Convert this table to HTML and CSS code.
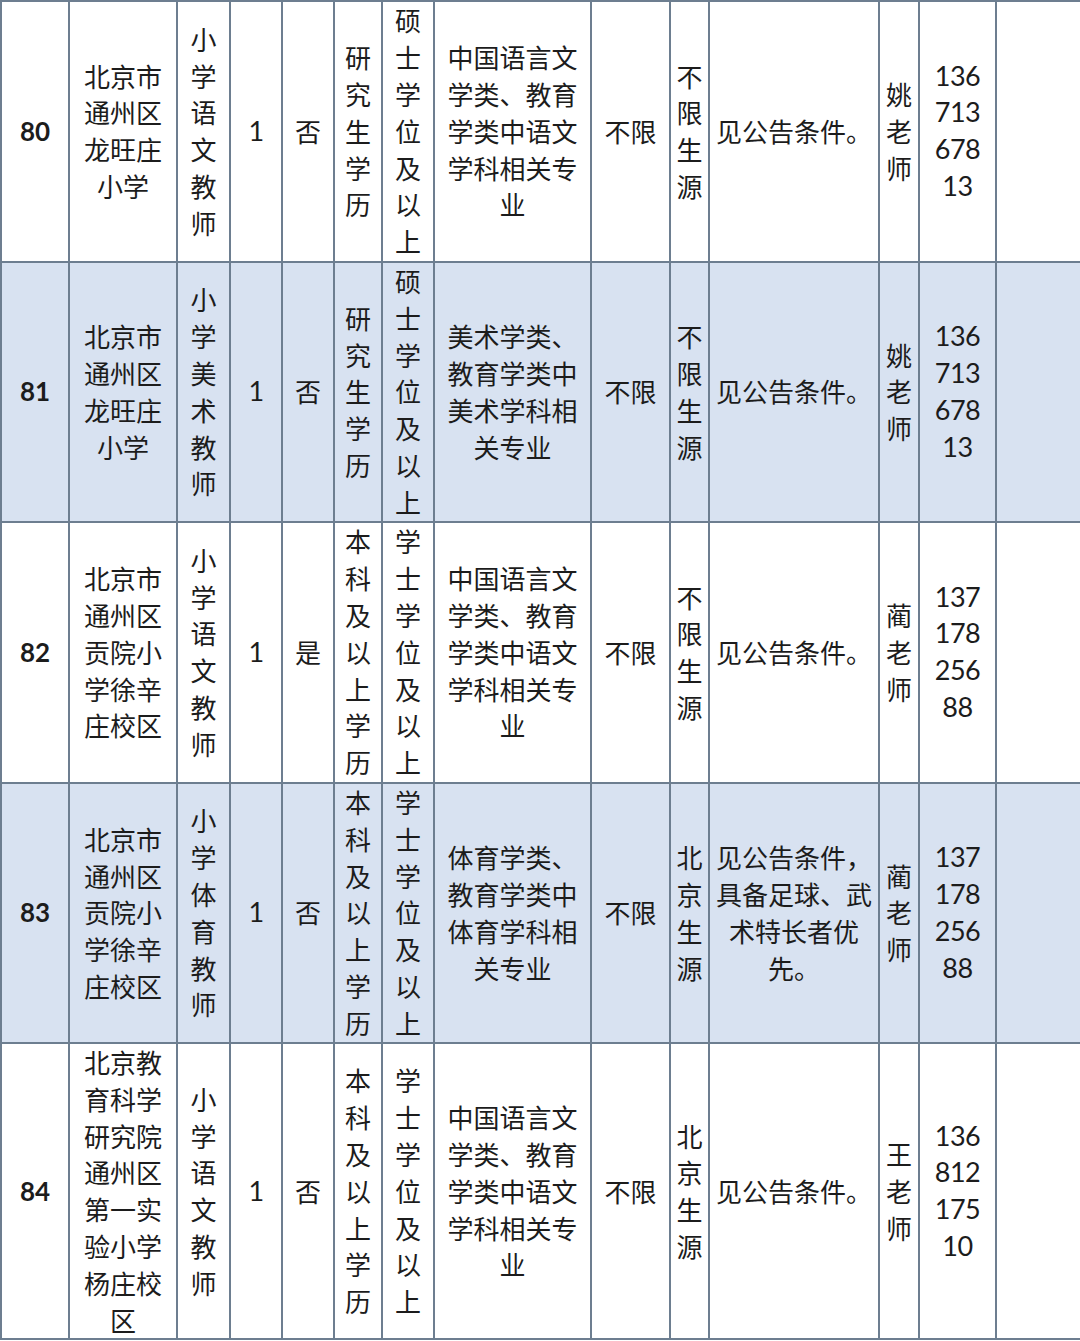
FILE: index.html
```html
<!DOCTYPE html>
<html lang="zh-CN">
<head>
<meta charset="utf-8">
<title>招聘岗位表</title>
<link rel="stylesheet" href="styles.css">
</head>
<body>
<table class="jobs">
  <colgroup>
    <col class="c-no"><col class="c-school"><col class="c-post"><col class="c-num"><col class="c-yn">
    <col class="c-edu"><col class="c-deg"><col class="c-major"><col class="c-age"><col class="c-src">
    <col class="c-cond"><col class="c-contact"><col class="c-phone"><col class="c-note">
  </colgroup>
  <tbody>
    <tr class="r">
      <td class="no">80</td>
      <td class="school">北京市通州区龙旺庄小学</td>
      <td class="v">小学语文教师</td>
      <td class="num">1</td>
      <td>否</td>
      <td class="v">研究生学历</td>
      <td class="v">硕士学位及以上</td>
      <td class="major">中国语言文学类、教育学类中语文学科相关专业</td>
      <td>不限</td>
      <td class="v">不限生源</td>
      <td class="cond">见公告条件。</td>
      <td class="v">姚老师</td>
      <td class="phone">136<br>713<br>678<br>13</td>
      <td class="note"></td>
    </tr>
    <tr class="r alt">
      <td class="no">81</td>
      <td class="school">北京市通州区龙旺庄小学</td>
      <td class="v">小学美术教师</td>
      <td class="num">1</td>
      <td>否</td>
      <td class="v">研究生学历</td>
      <td class="v">硕士学位及以上</td>
      <td class="major">美术学类、教育学类中美术学科相关专业</td>
      <td>不限</td>
      <td class="v">不限生源</td>
      <td class="cond">见公告条件。</td>
      <td class="v">姚老师</td>
      <td class="phone">136<br>713<br>678<br>13</td>
      <td class="note"></td>
    </tr>
    <tr class="r">
      <td class="no">82</td>
      <td class="school">北京市通州区贡院小学徐辛庄校区</td>
      <td class="v">小学语文教师</td>
      <td class="num">1</td>
      <td>是</td>
      <td class="v">本科及以上学历</td>
      <td class="v">学士学位及以上</td>
      <td class="major">中国语言文学类、教育学类中语文学科相关专业</td>
      <td>不限</td>
      <td class="v">不限生源</td>
      <td class="cond">见公告条件。</td>
      <td class="v">蔺老师</td>
      <td class="phone">137<br>178<br>256<br>88</td>
      <td class="note"></td>
    </tr>
    <tr class="r alt">
      <td class="no">83</td>
      <td class="school">北京市通州区贡院小学徐辛庄校区</td>
      <td class="v">小学体育教师</td>
      <td class="num">1</td>
      <td>否</td>
      <td class="v">本科及以上学历</td>
      <td class="v">学士学位及以上</td>
      <td class="major">体育学类、教育学类中体育学科相关专业</td>
      <td>不限</td>
      <td class="v">北京生源</td>
      <td class="cond">见公告条件，具备足球、武术特长者优先。</td>
      <td class="v">蔺老师</td>
      <td class="phone">137<br>178<br>256<br>88</td>
      <td class="note"></td>
    </tr>
    <tr class="r last">
      <td class="no">84</td>
      <td class="school">北京教育科学研究院通州区第一实验小学杨庄校区</td>
      <td class="v">小学语文教师</td>
      <td class="num">1</td>
      <td>否</td>
      <td class="v">本科及以上学历</td>
      <td class="v">学士学位及以上</td>
      <td class="major">中国语言文学类、教育学类中语文学科相关专业</td>
      <td>不限</td>
      <td class="v">北京生源</td>
      <td class="cond">见公告条件。</td>
      <td class="v">王老师</td>
      <td class="phone">136<br>812<br>175<br>10</td>
      <td class="note"></td>
    </tr>
  </tbody>
</table>
</body>
</html>
```
FILE: styles.css
```css
html, body {
  margin: 0;
  padding: 0;
  background: #ffffff;
}

.jobs {
  width: 1080px;
  table-layout: fixed;
  border-collapse: collapse;
  font-family: "Noto Sans CJK SC", "Noto Sans", sans-serif;
  font-size: 26px;
  line-height: 36.8px;
  color: #1c1c1c;
}

.c-no { width: 68px; }
.c-school { width: 108px; }
.c-post { width: 53px; }
.c-num { width: 52px; }
.c-yn { width: 52px; }
.c-edu { width: 48px; }
.c-deg { width: 52px; }
.c-major { width: 157px; }
.c-age { width: 79px; }
.c-src { width: 39px; }
.c-cond { width: 170px; }
.c-contact { width: 40px; }
.c-phone { width: 77px; }
.c-note { width: 85px; }

.jobs td {
  border: 2px solid #6d7e90;
  padding: 0;
  text-align: center;
  vertical-align: middle;
  word-break: break-all;
  overflow: hidden;
}

.jobs td.note {
  border-right-color: #c6d0dc;
}

.r { height: 260.5px; }
.r.last { height: 296px; }

.alt td { background: #d8e2f1; }

.jobs td.no {
  font-family: Lato, "Liberation Sans", sans-serif;
  font-weight: 700;
  font-size: 26px;
}

.jobs td.num,
.jobs td.phone {
  font-family: Lato, "Liberation Sans", sans-serif;
  font-size: 27px;
  letter-spacing: -0.5px;
}

.jobs td.school { padding: 0 14px; }
.jobs td.v { padding: 0 4px; }
.jobs td.major { padding: 0 10px; }
.jobs td.cond { padding: 0 4px; }
```
